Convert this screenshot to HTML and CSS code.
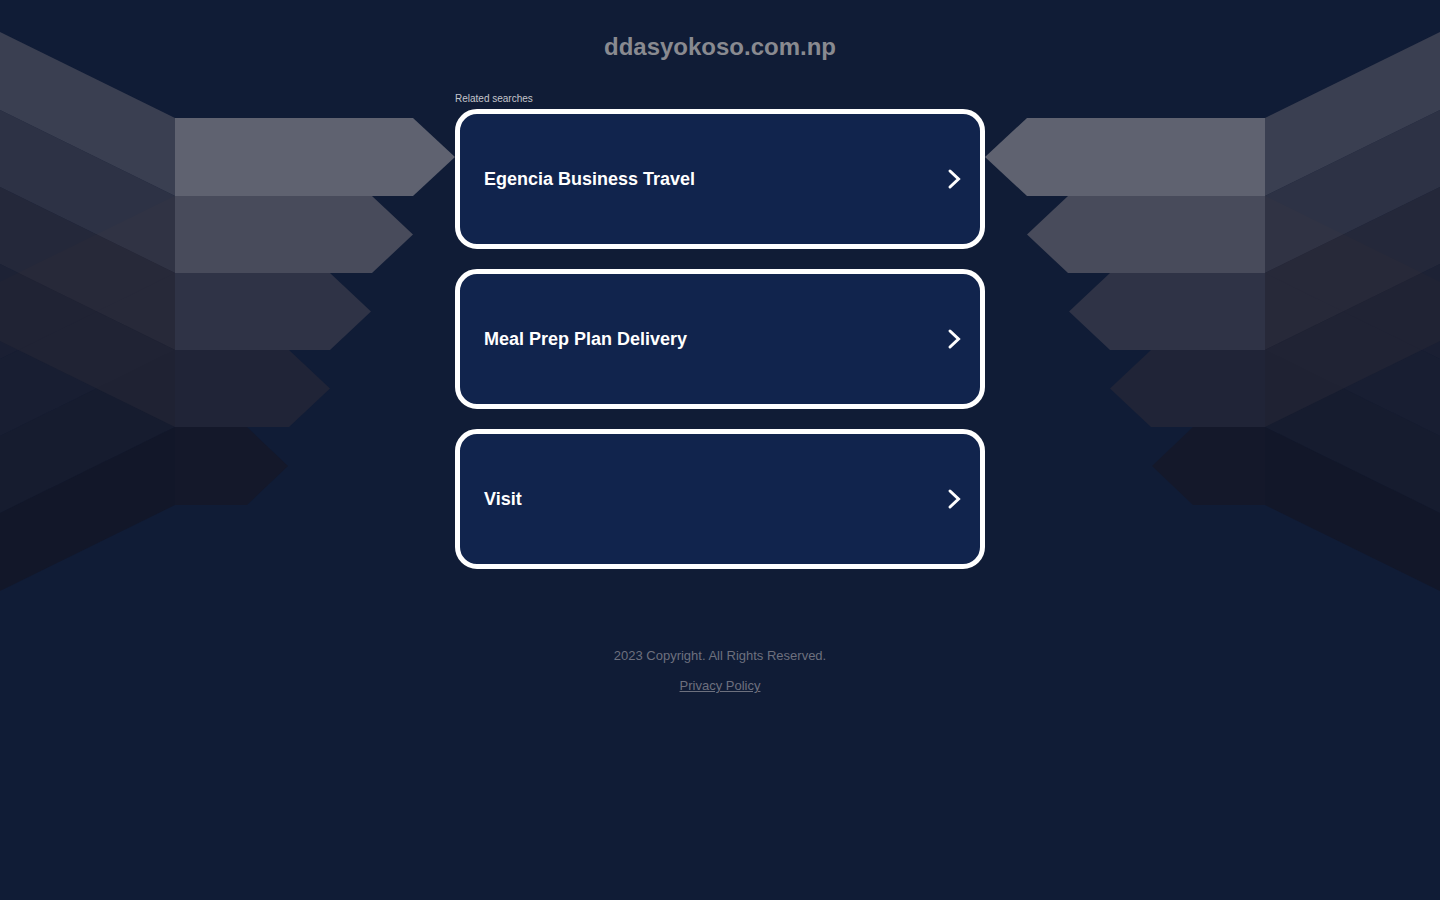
FILE: index.html
```html
<!DOCTYPE html>
<html lang="en">
<head>
<meta charset="utf-8">
<title>ddasyokoso.com.np</title>
<link rel="stylesheet" href="styles.css">
</head>
<body>
<div class="backdrop" aria-hidden="true">
  <svg class="wing wing-left" width="455" height="600" viewBox="0 0 455 600">
    <g class="layers">
      <polygon class="d2" points="175,196 175,273 0,359 0,282"/>
      <polygon class="d3" points="175,273 175,350 0,436 0,359"/>
      <polygon class="d4" points="175,350 175,427 0,513 0,436"/>
      <polygon class="d5" points="175,427 175,505 0,591 0,513"/>
      <polygon class="u1" points="175,118 175,196 0,110 0,32"/>
      <polygon class="u2" points="175,196 175,273 0,187 0,110"/>
      <polygon class="u3" points="175,273 175,350 0,264 0,187"/>
      <polygon class="u4" points="175,350 175,427 0,341 0,264"/>
    </g>
    <polygon class="row1" points="175,118 413,118 455,157 413,196 175,196"/>
    <polygon class="row2" points="175,196 372,196 413,234.5 372,273 175,273"/>
    <polygon class="row3" points="175,273 330,273 371,311.5 330,350 175,350"/>
    <polygon class="row4" points="175,350 289,350 330,388.5 289,427 175,427"/>
    <polygon class="row5" points="175,427 247,427 288,466 247,505 175,505"/>
  </svg>
  <svg class="wing wing-right" width="455" height="600" viewBox="0 0 455 600">
    <g class="layers">
      <polygon class="d2" points="175,196 175,273 0,359 0,282"/>
      <polygon class="d3" points="175,273 175,350 0,436 0,359"/>
      <polygon class="d4" points="175,350 175,427 0,513 0,436"/>
      <polygon class="d5" points="175,427 175,505 0,591 0,513"/>
      <polygon class="u1" points="175,118 175,196 0,110 0,32"/>
      <polygon class="u2" points="175,196 175,273 0,187 0,110"/>
      <polygon class="u3" points="175,273 175,350 0,264 0,187"/>
      <polygon class="u4" points="175,350 175,427 0,341 0,264"/>
    </g>
    <polygon class="row1" points="175,118 413,118 455,157 413,196 175,196"/>
    <polygon class="row2" points="175,196 372,196 413,234.5 372,273 175,273"/>
    <polygon class="row3" points="175,273 330,273 371,311.5 330,350 175,350"/>
    <polygon class="row4" points="175,350 289,350 330,388.5 289,427 175,427"/>
    <polygon class="row5" points="175,427 247,427 288,466 247,505 175,505"/>
  </svg>
</div>

<main class="page">
  <h1 class="domain">ddasyokoso.com.np</h1>
  <section class="related">
    <p class="related-title">Related searches</p>
    <div class="links">
      <a class="link-card" href="#">
        <span class="link-text">Egencia Business Travel</span>
        <svg class="chevron" width="16" height="22" viewBox="0 0 16 22"><path d="M4 3 L12.5 11 L4 19"/></svg>
      </a>
      <a class="link-card" href="#">
        <span class="link-text">Meal Prep Plan Delivery</span>
        <svg class="chevron" width="16" height="22" viewBox="0 0 16 22"><path d="M4 3 L12.5 11 L4 19"/></svg>
      </a>
      <a class="link-card" href="#">
        <span class="link-text">Visit</span>
        <svg class="chevron" width="16" height="22" viewBox="0 0 16 22"><path d="M4 3 L12.5 11 L4 19"/></svg>
      </a>
    </div>
  </section>
  <footer class="footer">
    <p class="copyright">2023 Copyright. All Rights Reserved.</p>
    <a class="privacy" href="#">Privacy Policy</a>
  </footer>
</main>
</body>
</html>
```

FILE: styles.css
```css
html, body {
  margin: 0;
  padding: 0;
}

body {
  background: #101c36;
  font-family: "Liberation Sans", Arial, sans-serif;
  min-height: 900px;
  position: relative;
  overflow: hidden;
}

.backdrop {
  position: absolute;
  top: 0;
  left: 0;
  right: 0;
  height: 600px;
  display: flex;
  justify-content: space-between;
  z-index: 0;
}

.wing {
  display: block;
  flex: none;
}

.wing-right {
  transform: scaleX(-1);
}

.layers polygon { fill-opacity: 0.7; }
.u1 { fill: rgb(77, 78, 93); }
.u2 { fill: rgb(59, 60, 76); }
.u3 { fill: rgb(45, 46, 60); }
.u4 { fill: rgb(36, 37, 53); }
.d2 { fill: rgb(31, 33, 50); }
.d3 { fill: rgb(29, 31, 48); }
.d4 { fill: rgb(26, 28, 44); }
.d5 { fill: rgb(20, 22, 35); }

.row1 { fill: #5f6270; }
.row2 { fill: #484b5b; }
.row3 { fill: #2f3346; }
.row4 { fill: #202437; }
.row5 { fill: #14182a; }

.page {
  position: relative;
  z-index: 1;
  width: 530px;
  margin: 0 auto;
  padding-top: 33px;
  display: flex;
  flex-direction: column;
}

.domain {
  margin: 0;
  font-size: 24px;
  line-height: 28px;
  font-weight: bold;
  color: #898a90;
  text-align: center;
}

.related {
  margin-top: 32px;
}

.related-title {
  margin: 0 0 4px;
  font-size: 10px;
  line-height: 12px;
  color: #c4c5cb;
}

.links {
  display: flex;
  flex-direction: column;
  gap: 20px;
}

.link-card {
  box-sizing: border-box;
  height: 140px;
  border: 5px solid #ffffff;
  border-radius: 22px;
  background: #11244d;
  display: flex;
  align-items: center;
  justify-content: space-between;
  padding: 0 18px 0 24px;
  text-decoration: none;
}

.link-text {
  font-size: 18px;
  line-height: 21px;
  font-weight: bold;
  color: #ffffff;
}

.chevron {
  display: block;
  flex: none;
}

.chevron path {
  fill: none;
  stroke: #ffffff;
  stroke-width: 3;
  stroke-linecap: round;
  stroke-linejoin: miter;
}

.footer {
  margin-top: 79px;
  display: flex;
  flex-direction: column;
  align-items: center;
}

.copyright {
  margin: 0;
  font-size: 13px;
  line-height: 16px;
  color: #6d707e;
}

.privacy {
  margin-top: 14px;
  font-size: 13px;
  line-height: 16px;
  color: #6d707e;
  text-decoration: underline;
}
```
